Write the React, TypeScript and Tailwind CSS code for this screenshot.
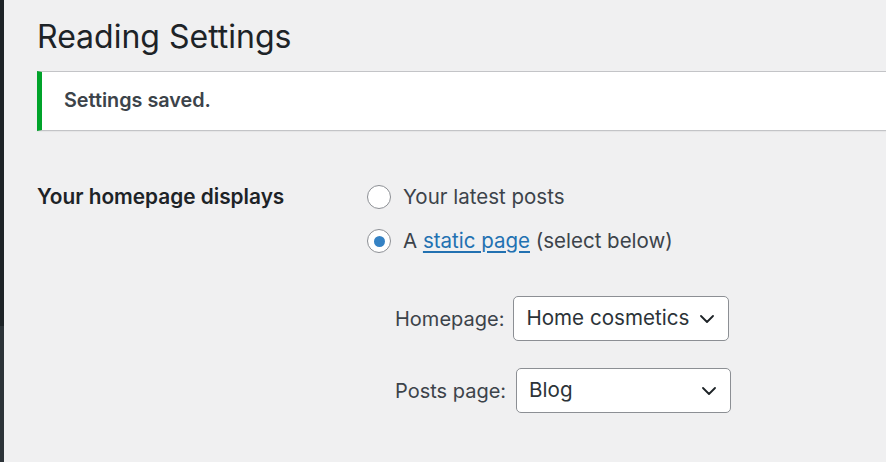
import React from "react";

const font = { fontFamily: "Inter, 'Noto Sans', sans-serif" };

function Chevron() {
  return (
    <svg width="14" height="8" viewBox="0 0 14 8" fill="none" className="shrink-0">
      <path d="M1 1l6 6 6-6" stroke="#1d2327" strokeWidth="1.8" strokeLinecap="round" strokeLinejoin="round" />
    </svg>
  );
}

function Radio({ checked }: { checked?: boolean }) {
  return (
    <span className="flex h-[24px] w-[24px] shrink-0 items-center justify-center rounded-full border border-[#8c8f94] bg-white">
      {checked && <span className="h-[11px] w-[11px] rounded-full bg-[#3582c4]" />}
    </span>
  );
}

function SelectBox({ value, width }: { value: string; width: string }) {
  return (
    <div
      className={`flex h-[45px] ${width} items-center justify-between rounded-[5px] border border-[#8c8f94] bg-white pl-[12px] pr-[14px] text-[20.6px] text-[#2c3338]`}
    >
      <span>{value}</span>
      <Chevron />
    </div>
  );
}

export default function App() {
  return (
    <div className="flex h-[462px] w-[886px] overflow-hidden bg-[#f0f0f1]" style={font}>
      <div className="flex w-[4px] shrink-0 flex-col">
        <div className="h-[326px] bg-[#1d2327]" />
        <div className="flex-1 bg-[#2c3338]" />
      </div>
      <div className="flex-1 pl-[33px] pt-[16px]">
        <h1 className="text-[32px] leading-[42px] font-normal text-[#1d2327]">Reading Settings</h1>
        <div className="mt-[13px] flex h-[60px] items-center border-y border-[#c3c4c7] border-l-[5px] border-l-[#00a32a] bg-white pl-[22px] shadow-[0_1px_1px_rgba(0,0,0,0.04)]">
          <p className="text-[19.8px] font-semibold text-[#3c434a]">Settings saved.</p>
        </div>
        <div className="mt-[53px] flex">
          <div className="w-[330px] text-[20.8px] leading-[26px] font-semibold text-[#1d2327]">
            Your homepage displays
          </div>
          <div className="flex flex-col text-[20.5px] text-[#3c434a]">
            <label className="flex h-[26px] items-center gap-[12px]">
              <Radio />
              <span>Your latest posts</span>
            </label>
            <label className="mt-[18px] flex h-[26px] items-center gap-[12px]">
              <Radio checked />
              <span>
                A{" "}
                <a className="text-[#2271b1] underline underline-offset-[3px]" href="#">
                  static page
                </a>{" "}
                (select below)
              </span>
            </label>
            <div className="mt-[42px] flex flex-col gap-[27px] pl-[28px] text-[20px]">
              <div className="flex items-center gap-[9px]">
                <span>Homepage:</span>
                <SelectBox value="Home cosmetics" width="w-[216px]" />
              </div>
              <div className="flex items-center gap-[10px]">
                <span>Posts page:</span>
                <SelectBox value="Blog" width="w-[215px]" />
              </div>
            </div>
          </div>
        </div>
      </div>
    </div>
  );
}
